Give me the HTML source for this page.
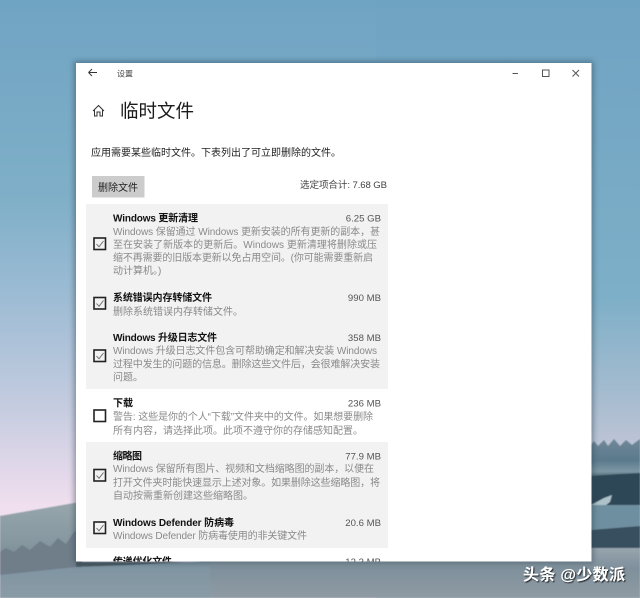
<!DOCTYPE html>
<html><head><meta charset="utf-8"><style>
html,body{margin:0;padding:0;width:640px;height:598px;overflow:hidden;background:#78abc9}
svg{display:block}
text{font-family:"Liberation Sans","Noto Sans CJK SC",sans-serif;dominant-baseline:auto}
.d{font-size:10px;fill:#8a8a8a}
.t{font-size:10px;font-weight:bold;fill:#111}
.s{font-size:9.6px;fill:#555;text-anchor:end}
.c{fill:none;stroke:#222;stroke-width:1.6}
.k{fill:none;stroke:#666;stroke-width:.9}
</style></head><body>
<svg width="640" height="598" viewBox="0 0 640 598" xmlns="http://www.w3.org/2000/svg">
<defs>
<linearGradient id="l" x1="0" y1="0" x2="0" y2="598" gradientUnits="userSpaceOnUse">
<stop offset="0" stop-color="#70a4c3"/><stop offset=".33" stop-color="#7fafc8"/><stop offset=".5" stop-color="#9dbcd4"/><stop offset=".674" stop-color="#c3cbdf"/><stop offset=".79" stop-color="#e2d8ea"/><stop offset=".846" stop-color="#f0dfee"/><stop offset="1" stop-color="#f0dfee"/>
</linearGradient>
<linearGradient id="r" x1="0" y1="0" x2="0" y2="598" gradientUnits="userSpaceOnUse">
<stop offset="0" stop-color="#6fa3c2"/><stop offset=".5" stop-color="#7eafc8"/><stop offset=".674" stop-color="#a9bdd0"/><stop offset=".74" stop-color="#bcc4d6"/><stop offset="1" stop-color="#bcc4d6"/>
</linearGradient>
<linearGradient id="sea" x1="0" y1="548" x2="0" y2="598" gradientUnits="userSpaceOnUse">
<stop offset="0" stop-color="#98a5ae"/><stop offset=".4" stop-color="#7f909c"/><stop offset="1" stop-color="#8f9ba4"/>
</linearGradient>
<linearGradient id="seal" x1="0" y1="565" x2="0" y2="598" gradientUnits="userSpaceOnUse">
<stop offset="0" stop-color="#7f95a2"/><stop offset="1" stop-color="#8a9ba6"/>
</linearGradient>
<linearGradient id="hill" x1="0" y1="503" x2="0" y2="575" gradientUnits="userSpaceOnUse">
<stop offset="0" stop-color="#97a6ac"/><stop offset=".55" stop-color="#8697a0"/><stop offset="1" stop-color="#6f818c"/>
</linearGradient>
<linearGradient id="rh" x1="0" y1="440" x2="0" y2="477" gradientUnits="userSpaceOnUse">
<stop offset="0" stop-color="#6f8799"/><stop offset=".55" stop-color="#5a7a8c"/><stop offset=".85" stop-color="#7d97a4"/><stop offset="1" stop-color="#4c6675"/>
</linearGradient>
<filter id="b"><feGaussianBlur stdDeviation=".6"/></filter>
<filter id="sh" x="-10%" y="-10%" width="120%" height="120%"><feGaussianBlur stdDeviation="3"/></filter>
<filter id="ws"><feDropShadow dx="1" dy="1" stdDeviation=".5" flood-color="#111" flood-opacity=".9"/></filter>
<clipPath id="win"><rect x="76" y="63" width="515.5" height="498.5"/></clipPath>
</defs>

<rect width="76" height="598" fill="url(#l)"/>
<rect x="76" width="300" height="598" fill="url(#l)"/>
<rect x="376" width="264" height="598" fill="url(#r)"/>
<g filter="url(#b)">
<polygon points="0,516 80,502 80,580 0,580" fill="url(#hill)"/>
<polygon points="0,552 6,548 14,552 22,545 30,550 40,541 50,547 58,538 66,544 74,532 82,528 82,568 40,572 0,576" fill="#6f7e8a"/>
<polygon points="590,446 594,441 598,446 604,440 608,446 614,439 620,446 626,440 632,445 640,439 640,480 590,480" fill="url(#rh)"/>
<polygon points="590,476 620,474 640,473 640,507 590,507" fill="#2f4757"/>
<polygon points="590,505 640,505 640,526 590,530" fill="#6e8f9f"/>
<polygon points="591,505 604,498 612,495 610,502 606,505" fill="#aec3c9"/>
<polygon points="590,530 640,526 640,549 590,549" fill="#38505f"/>
<rect x="200" y="548" width="440" height="50" fill="url(#sea)"/>
<polygon points="0,575 76,567 210,561 210,598 0,598" fill="url(#seal)"/>
<polygon points="76,562 190,562 130,565 76,567" fill="#4a5a64"/>
</g>

<rect x="74" y="61" width="519.5" height="502.5" fill="#2c3f4e" opacity=".45" filter="url(#sh)"/>
<rect x="76" y="63" width="515.5" height="498.5" fill="#fff"/>

<g clip-path="url(#win)">
<path d="M88.5 72.5H97M88.5 72.5L92 69M88.5 72.5L92 76" fill="none" stroke="#333" stroke-width=".9"/>
<text x="117" y="76.5" font-size="8" fill="#444" textLength="16">设置</text>
<path d="M512.5 73.5H518" stroke="#555" stroke-width="1" fill="none"/>
<rect x="542.5" y="70" width="6.5" height="6.5" fill="none" stroke="#555" stroke-width="1"/>
<path d="M572.5 70L579 76.5M579 70L572.5 76.5" stroke="#555" stroke-width="1" fill="none"/>

<path d="M93 111L98.5 105.5L104 111M94.5 110V116H97V112H100V116H102.5V110" fill="none" stroke="#333" stroke-width="1"/>
<text x="120" y="117.5" font-size="18.5" fill="#1a1a1a" textLength="74">临时文件</text>
<text x="91" y="156" font-size="10" fill="#222" textLength="250">应用需要某些临时文件。下表列出了可立即删除的文件。</text>

<rect x="92" y="176" width="52.5" height="21.5" fill="#ccc"/>
<text x="98" y="191" font-size="10" fill="#222" textLength="40">删除文件</text>
<text x="300" y="188" font-size="9.6" fill="#444" textLength="87">选定项合计: 7.68 GB</text>

<rect x="86" y="204" width="302" height="185" fill="#f2f2f2"/>
<rect x="86" y="442" width="302" height="106" fill="#f2f2f2"/>

<text class="t" x="113" y="221.5" textLength="85">Windows 更新清理</text><text class="s" x="381" y="221.5">6.25 GB</text>
<text class="d" x="113" y="235" textLength="267">Windows 保留通过 Windows 更新安装的所有更新的副本，甚</text>
<text class="d" x="113" y="248" textLength="264">至在安装了新版本的更新后。Windows 更新清理将删除或压</text>
<text class="d" x="113" y="261" textLength="260">缩不再需要的旧版本更新以免占用空间。(你可能需要重新启</text>
<text class="d" x="113" y="274">动计算机。)</text>

<text class="t" x="113" y="301" textLength="99">系统错误内存转储文件</text><text class="s" x="381" y="301">990 MB</text>
<text class="d" x="113" y="315">删除系统错误内存转储文件。</text>

<text class="t" x="113" y="341" textLength="104">Windows 升级日志文件</text><text class="s" x="381" y="341">358 MB</text>
<text class="d" x="113" y="354" textLength="264">Windows 升级日志文件包含可帮助确定和解决安装 Windows</text>
<text class="d" x="113" y="367.5" textLength="267">过程中发生的问题的信息。删除这些文件后，会很难解决安装</text>
<text class="d" x="113" y="380.5">问题。</text>

<text class="t" x="113" y="406.5" textLength="20">下载</text><text class="s" x="381" y="406.5">236 MB</text>
<text class="d" x="113" y="420" textLength="260">警告: 这些是你的个人“下载”文件夹中的文件。如果想要删除</text>
<text class="d" x="113" y="434">所有内容，请选择此项。此项不遵守你的存储感知配置。</text>

<text class="t" x="113" y="459.5" textLength="29">缩略图</text><text class="s" x="381" y="459.5">77.9 MB</text>
<text class="d" x="113" y="472" textLength="261">Windows 保留所有图片、视频和文档缩略图的副本，以便在</text>
<text class="d" x="113" y="486" textLength="267">打开文件夹时能快速显示上述对象。如果删除这些缩略图，将</text>
<text class="d" x="113" y="499">自动按需重新创建这些缩略图。</text>

<text class="t" x="113" y="526" textLength="121">Windows Defender 防病毒</text><text class="s" x="381" y="526">20.6 MB</text>
<text class="d" x="113" y="539" textLength="194">Windows Defender 防病毒使用的非关键文件</text>

<text class="t" x="113" y="565" textLength="59">传递优化文件</text><text class="s" x="381" y="565">12.3 MB</text>

<rect class="c" x="94" y="238" width="11.5" height="11.5"/><path class="k" d="M96.5 244L99 246.8L103.5 241"/>
<rect class="c" x="94" y="297.5" width="11.5" height="11.5"/><path class="k" d="M96.5 303.5L99 306.3L103.5 300.5"/>
<rect class="c" x="94" y="350" width="11.5" height="11.5"/><path class="k" d="M96.5 356L99 358.8L103.5 353"/>
<rect class="c" x="94" y="410" width="11.5" height="11.5"/>
<rect class="c" x="94" y="469.5" width="11.5" height="11.5"/><path class="k" d="M96.5 475.5L99 478.3L103.5 472.5"/>
<rect class="c" x="94" y="522" width="11.5" height="11.5"/><path class="k" d="M96.5 528L99 530.8L103.5 525"/>
</g>

<text x="523" y="580" font-size="16" font-weight="bold" fill="#fff" textLength="102" filter="url(#ws)">头条 @少数派</text>
</svg>
</body></html>
